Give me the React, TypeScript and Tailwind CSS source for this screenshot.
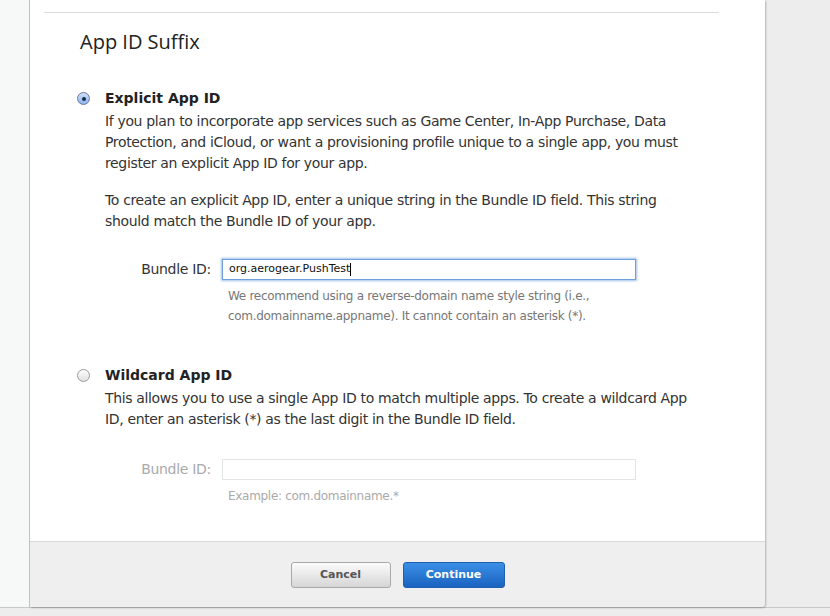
export default function App() {
  const body = { fontFamily: '"DejaVu Sans", "Liberation Sans", sans-serif' };
  return (
    <div className="w-[830px] h-[616px] bg-[#ededed] overflow-hidden" style={body}>
      <div className="flex h-[608px] border-b border-[#c8c8c8]">
        {/* sidebar */}
        <div className="w-[30px] bg-[#f7f8f8] border-r border-[#c4c4c4] shrink-0" />
        {/* main panel */}
        <div className="w-[735px] flex flex-col bg-white shadow-[1px_1px_2px_rgba(0,0,0,0.25)] rounded-br-[4px]">
          <div className="flex-1 pl-[14px] pr-[46px] pt-[12px]">
            <div className="h-px bg-[#dcdcdc]" />
            <h2
              className="pl-[36px] pt-[16px] text-[20px] leading-[26px] text-[#222]"
              style={{ fontFamily: '"Open Sans", "Liberation Sans", sans-serif', fontWeight: 400 }}
            >
              App ID Suffix
            </h2>

            {/* explicit */}
            <div className="mt-[33px] pl-[33px] flex gap-[15px]">
              <div className="w-[13px] h-[13px] mt-[4px] rounded-full border border-[#6a7a93] bg-gradient-to-b from-[#cfe0fb] to-[#8db3ef] flex items-center justify-center shrink-0">
                <div className="w-[4px] h-[4px] rounded-full bg-[#1b2a44]" />
              </div>
              <div className="flex-1">
                <div className="text-[14px] leading-[21px] font-bold text-[#222]">Explicit App ID</div>
                <p className="text-[14px] leading-[21px] text-[#333] mt-[2px] tracking-[-0.35px]">
                  If you plan to incorporate app services such as Game Center, In-App Purchase, Data Protection, and iCloud, or want a provisioning profile unique to a single app, you must register an explicit App ID for your app.
                </p>
                <p className="text-[14px] leading-[21px] text-[#333] mt-[16px] tracking-[-0.35px] w-[560px]">
                  To create an explicit App ID, enter a unique string in the Bundle ID field. This string should match the Bundle ID of your app.
                </p>
                <div className="mt-[27px] flex items-center">
                  <label className="w-[117px] text-right pr-[11px] text-[14px] text-[#333] tracking-[-0.3px]">Bundle ID:</label>
                  <div className="w-[414px] h-[21px] border border-[#6e9fd8] shadow-[0_0_2px_1px_rgba(96,150,220,0.6)] bg-white flex items-center pl-[6px] text-[11px] text-[#111]">
                    org.aerogear.PushTest<span className="w-px h-[13px] bg-black" />
                  </div>
                </div>
                <p className="ml-[123px] mt-[6px] text-[12px] leading-[20px] text-[#777] tracking-[-0.3px]">
                  We recommend using a reverse-domain name style string (i.e.,
                  <br />
                  com.domainname.appname). It cannot contain an asterisk (*).
                </p>
              </div>
            </div>

            {/* wildcard */}
            <div className="mt-[39px] pl-[33px] flex gap-[15px]">
              <div className="w-[13px] h-[13px] mt-[4px] rounded-full border border-[#9a9a9a] bg-gradient-to-b from-[#fdfdfd] to-[#e0e0e0] shrink-0" />
              <div className="flex-1">
                <div className="text-[14px] leading-[21px] font-bold text-[#222]">Wildcard App ID</div>
                <p className="text-[14px] leading-[21px] text-[#333] mt-[2px] tracking-[-0.35px] w-[585px]">
                  This allows you to use a single App ID to match multiple apps. To create a wildcard App ID, enter an asterisk (*) as the last digit in the Bundle ID field.
                </p>
                <div className="mt-[29px] flex items-center">
                  <label className="w-[117px] text-right pr-[11px] text-[14px] text-[#aaa] tracking-[-0.3px]">Bundle ID:</label>
                  <div className="w-[414px] h-[21px] border border-[#e4e4e4] bg-white" />
                </div>
                <p className="ml-[123px] mt-[6px] text-[12px] leading-[20px] text-[#aaa] tracking-[-0.3px]">
                  Example: com.domainname.*
                </p>
              </div>
            </div>
          </div>

          {/* footer */}
          <div className="h-[66px] bg-[#efefef] border-t border-[#d9d9d9] flex items-start pt-[20px] justify-center gap-[12px] rounded-br-[4px]">
            <button className="w-[100px] h-[26px] rounded-[3px] border border-[#a9a9a9] bg-gradient-to-b from-[#fbfbfb] to-[#d6d6d6] text-[11px] font-bold text-[#555]">
              Cancel
            </button>
            <button className="w-[102px] h-[26px] rounded-[3px] border border-[#1f5fae] bg-gradient-to-b from-[#3b8fe6] to-[#1a63c0] text-[11px] font-bold text-white">
              Continue
            </button>
          </div>
        </div>
      </div>
    </div>
  );
}
